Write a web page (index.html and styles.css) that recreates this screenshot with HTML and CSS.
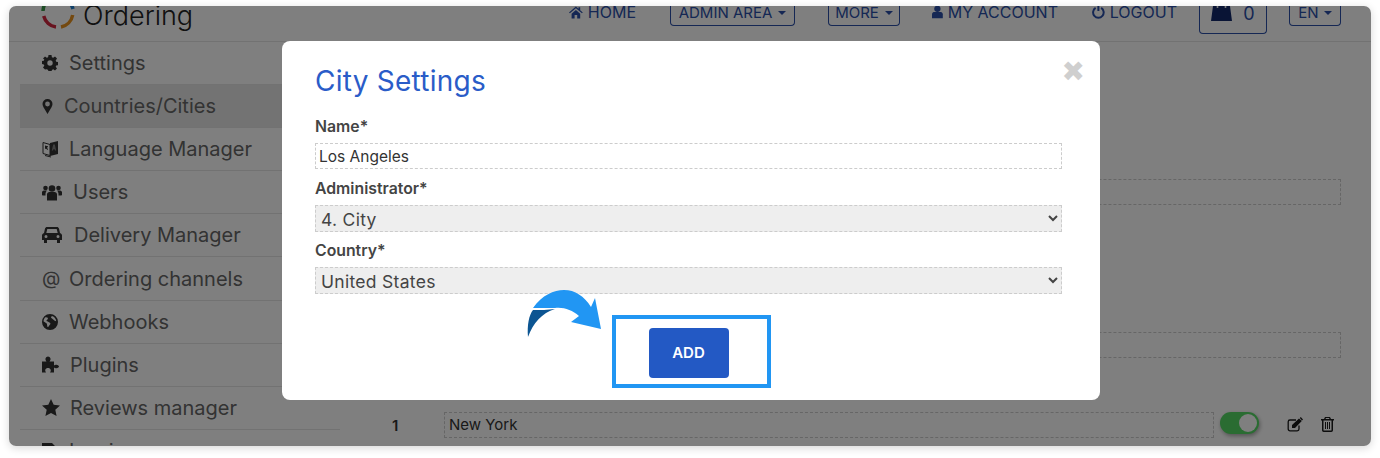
FILE: index.html
```html
<!DOCTYPE html>
<html lang="en">
<head>
<meta charset="utf-8">
<title>City Settings</title>
<link rel="stylesheet" href="styles.css">
</head>
<body>
<div class="card">
  <header class="topbar">
    <div class="logo">
      <svg class="logo-ring" viewBox="0 0 34 34" width="34" height="34"><g fill="none" stroke-width="3.5"><path d="M4.500 8A15 15 0 0 0 2 16" stroke="#3a9a4a"/><path d="M2.700 21A15 15 0 0 0 15 32" stroke="#d0263e"/><path d="M20 32A15 15 0 0 0 31.700 20" stroke="#e8921e"/><path d="M32 14A15 15 0 0 0 29 8" stroke="#1f7fd0"/></g></svg>
      <span class="logo-text">Ordering</span>
    </div>
    <nav class="nav">
      <a class="nav-link nav-home"><svg viewBox="0 0 16 14" width="15" height="13"><path fill="currentColor" d="M8 0l3 2.600V1h2v3.400L16 7l-1 1-7-6-7 6-1-1zM3 8.500L8 4l5 4.500V14H9.500v-4h-3v4H3z"/></svg>HOME</a>
      <a class="nav-btn nav-admin">ADMIN AREA<i class="caret"></i></a>
      <a class="nav-btn nav-more">MORE<i class="caret"></i></a>
      <a class="nav-link nav-account"><svg viewBox="0 0 12 14" width="12" height="14"><circle cx="6" cy="3.500" r="3.500" fill="currentColor"/><path fill="currentColor" d="M0 14V9.500C0 7.500 1.500 7 3 7h6c1.500 0 3 .5 3 2.500V14z"/></svg>MY ACCOUNT</a>
      <a class="nav-link nav-logout"><svg viewBox="0 0 14 14" width="14" height="14"><path fill="none" stroke="currentColor" stroke-width="2.200" d="M4 2.500A5.800 5.800 0 1 0 10 2.500M7 0v6"/></svg>LOGOUT</a>
      <a class="nav-btn nav-cart"><svg viewBox="0 0 21 15" width="21" height="15"><path fill="#12296b" fill-rule="evenodd" d="M2 0h17l2 15H0zM6.500 0a1 1 0 1 0 0 2 1 1 0 0 0 0-2zm8 0a1 1 0 1 0 0 2 1 1 0 0 0 0-2z"/></svg><span class="cart-count">0</span></a>
      <a class="nav-btn nav-lang">EN<i class="caret"></i></a>
    </nav>
  </header>
  <div class="body">
    <aside class="sidebar">
      <div class="item"><svg class="ico" viewBox="0 0 16 16" width="16" height="16"><path d="M6.500 0h3l.4 2.200 1.300.6L13 1.500 15 3.600l-1.300 1.800.5 1.300 2.300.4v3l-2.300.4-.5 1.200 1.300 1.900-2 2-1.800-1.300-1.300.6-.4 2.100h-3l-.4-2.100-1.300-.6L3 14.600l-2-2 1.300-1.900-.5-1.200L0 9.100v-3l1.800-.4.500-1.300L1 3.600l2-2.100 1.800 1.300 1.300-.6zM8 5.300a2.700 2.700 0 1 0 0 5.400 2.700 2.700 0 0 0 0-5.400z" fill-rule="evenodd"/></svg>Settings</div>
      <div class="item active"><svg class="ico ico-pin" viewBox="0 0 10 15" width="11" height="15"><path fill-rule="evenodd" d="M5 0a5 5 0 0 1 5 5c0 1.200-.4 2-1 3.200L5 15 1 8.200C.4 7 0 6.200 0 5a5 5 0 0 1 5-5zm0 2.600a2.400 2.400 0 1 0 0 4.800 2.400 2.400 0 0 0 0-4.800z"/></svg>Countries/Cities</div>
      <div class="item"><svg class="ico" viewBox="0 0 16 18" width="16" height="18"><path fill="none" stroke="#333" stroke-width="1" d="M1 2.500l7 2v11l-7-2zM3 15.500l6 1.500"/><path fill="#333" d="M3 5.500l3 .8v1L5 7l1 3-1-.3L4.700 9 3.800 8.800 3.500 9 3 8.500z"/><path d="M8 3l8-2v13l-8 2z"/><path fill="#808080" d="M11.200 4.500h1.600l1.400 6h-1.200l-.3-1.300h-1.400l-.3 1.300h-1.200z"/></svg>Language Manager</div>
      <div class="item"><svg class="ico" viewBox="0 0 20 16" width="20" height="19"><circle cx="10" cy="4" r="3.300"/><circle cx="3.500" cy="3.500" r="2.300"/><circle cx="16.500" cy="3.500" r="2.300"/><path d="M5 16V10c0-1.600 1-2.500 2.500-2.500h5C14 7.500 15 8.400 15 10v6z"/><path d="M0 10V8c0-1 .7-2 2-2h3.200c-1 .6-1.700 2-1.700 3.500V11H1c-.6 0-1-.4-1-1zM20 10V8c0-1-.7-2-2-2h-3.200c1 .6 1.700 2 1.700 3.500V11H19c.6 0 1-.4 1-1z"/></svg>Users</div>
      <div class="item"><svg class="ico ico-car" viewBox="0 0 20 16" width="20" height="16"><path fill-rule="evenodd" d="M5 0h10c1 0 1.600.6 2 1.600L18 6c1.200.4 2 1.300 2 2.600V13h-2v3h-3v-3H5v3H2v-3H0V8.600C0 7.300.8 6.400 2 6l1-4.400C3.400.6 4 0 5 0zm.3 2L4.300 6h11.400l-1-4zM4 8a1.500 1.500 0 1 0 0 3 1.500 1.500 0 0 0 0-3zm12 0a1.500 1.500 0 1 0 0 3 1.500 1.500 0 0 0 0-3z"/></svg>Delivery Manager</div>
      <div class="item"><span class="ico-at">@</span>Ordering channels</div>
      <div class="item"><svg class="ico" viewBox="0 0 16 16" width="16" height="16"><path fill-rule="evenodd" d="M8 0a8 8 0 1 1 0 16A8 8 0 0 1 8 0zM3 3.500C2 4.700 1.500 6 1.600 7.500c.8.200 1.300.8 2 1.300.6.400 1.200.5 1.300 1.200l.5 2.800c.5.500 1.200-.2 1.500-.8l1.500-2c.2-.6-.3-1.200-1-1.500l-1.600-1-1.300-.5c0-.7.500-1 1-1.400l.5-1.500C5.500 3.400 4 3.200 3 3.500zM10 2c-.6.500-1 1-1 1.800.6.700 1.400 1 2.200 1.600 1 .8 2 1.700 3 1.800C14 5 12.500 2.800 10 2z"/></svg>Webhooks</div>
      <div class="item"><svg class="ico ico-plug" viewBox="0 0 17 16" width="17" height="17"><path d="M0 5h4.500C4 4.200 3.200 3.500 3.500 2 3.800.7 5 0 6 0s2.200.7 2.500 2c.3 1.500-.5 2.200-1 3H12v4c.8-.5 1.400-1 2.500-.7 1.500.3 2.500 1 2.500 1.700s-1 1.400-2.500 1.700c-1.100.3-1.700-.2-2.500-.7v5H8c.5-.8 1-1.500.7-2.500C8.400 12 7.200 11.500 6 11.500s-2.400.5-2.700 1.800c-.3 1 .2 1.700.7 2.700H0z"/></svg>Plugins</div>
      <div class="item"><svg class="ico ico-star" viewBox="0 0 18 17" width="18" height="17"><path d="M9 0l2.700 5.800 6.300.7-4.700 4.300 1.300 6.200L9 13.900 3.400 17l1.300-6.200L0 6.500l6.300-.7z"/></svg>Reviews manager</div>
      <div class="item last"><svg class="ico" viewBox="0 0 16 16" width="16" height="16"><path d="M0 0h10l3 3v4H7v3h6v5H0zM9 8l4-3v2h3v3h-3v2z"/></svg>Invoices</div>
    </aside>
    <main class="main">
      <div class="field field-one"></div>
      <div class="field field-two"></div>
      <div class="row">
        <span class="row-num">1</span>
        <div class="row-input">New York</div>
        <span class="toggle"><span class="knob"></span></span>
        <svg class="row-edit" viewBox="0 0 16 15" width="16" height="15"><path fill="none" stroke="#1a1a1a" stroke-width="1.300" d="M12 8.500V12c0 1-.7 1.800-1.800 1.800H3C2 13.800 1.200 13 1.200 12V4.800C1.200 3.800 2 3 3 3h6"/><path fill="#1a1a1a" d="M5 8l7-6.500L14.800 4 8 11H5zM12.800 1l1-1L16 2.400l-1 1z"/></svg>
        <svg class="row-trash" viewBox="0 0 13 15" width="13" height="15"><path fill="#1a1a1a" fill-rule="evenodd" d="M4 0h5l1 2h3v1.500h-1V13c0 1.200-.7 2-1.700 2H2.700C1.700 15 1 14.200 1 13V3.500H0V2h3zm1 1l-.5 1h4L8 1zM2.500 3.500V13c0 .4.200.6.500.6h7c.3 0 .5-.2.500-.6V3.500zM4 5h1v7H4zm2 0h1v7H6zm2 0h1v7H8z"/></svg>
      </div>
    </main>
  </div>
  <div class="overlay">
    <section class="modal">
      <span class="close">✖</span>
      <h2 class="title">City Settings</h2>
      <label class="label">Name*</label>
      <input class="input" value="Los Angeles">
      <label class="label">Administrator*</label>
      <select class="select"><option>4. City</option></select>
      <label class="label">Country*</label>
      <select class="select"><option>United States</option></select>
      <div class="actions">
        <div class="highlight"><button class="add">ADD</button></div>
        <svg class="arrow" viewBox="0 0 74 48" width="74" height="48"><path fill="#0c5592" d="M0 47C-1 35 1 25 5 20C12 20 20 20 27 19C14 23 5 33 0 47z"/><path fill="#2196f3" d="M5 18C14 5 26 0 36 0C47 0 56 6 63 17L67 8L73 39L43 32L51 26C44 20 36 17 27 18C18 18 12 18 5 18z"/></svg>
      </div>
    </section>
  </div>
</div>
</body>
</html>
```
FILE: styles.css
```css
* { box-sizing: border-box; }
html, body { margin: 0; padding: 0; background: #fff; }
body { padding: 6px 9px 12px; font-family: Inter, "Open Sans", sans-serif; height: 458px; overflow: hidden; }
.card { position: relative; width: 1362px; height: 440px; background: #fff; border-radius: 7px; overflow: hidden; }
body::before { content: ""; position: absolute; left: 9px; top: 6px; width: 1362px; height: 440px; border-radius: 7px; box-shadow: 0 2px 8px rgba(0,0,0,.16); }
.topbar { display: flex; height: 36px; border-bottom: 1px solid #e4e4e4; overflow: hidden; }
.logo { display: flex; align-items: center; gap: 8px; margin: -15px 0 0 32px; height: 42px; flex: none; }
.logo-text { font-size: 27px; font-weight: 300; color: #222; padding-top: 6px; }
.nav { display: flex; align-items: flex-start; margin-left: auto; margin-right: 30px; font-size: 16px; }
.nav a { display: flex; align-items: center; color: #2a4fa8; white-space: nowrap; }
.nav-link { gap: 5px; height: 12px; }
.nav-btn { border: 1px solid #2a4fa8; border-top: 0; border-radius: 0 0 4px 4px; height: 20px; justify-content: center; padding-bottom: 6px; font-size: 15px; }
.caret { display: inline-block; margin-left: 6px; border: 4px solid transparent; border-top-color: currentColor; border-bottom: 0; }
.nav-home { width: 67px; margin-right: 34px; }
.nav-admin { width: 125px; margin-right: 33px; }
.nav-more { width: 72px; margin-right: 32px; }
.nav-account { width: 126px; margin-right: 34px; }
.nav-logout { width: 85px; margin-right: 22px; }
.nav-cart { width: 68px; height: 28px; padding: 0 0 13px; gap: 11px; margin-right: 22px; }
.cart-count { font-size: 18px; line-height: 15px; }
.nav-lang { width: 52px; }
.nav-lang .caret { margin-left: 5px; }
.body { display: flex; height: 404px; }
.sidebar { width: 320px; margin-left: 11px; flex: none; color: #666; font-size: 20px; }
.item { display: flex; align-items: center; height: 43.1px; padding-left: 22px; border-bottom: 1px solid #e4e4e4; white-space: nowrap; }
.item.active { background: #e6e6e6; }
.item.last { border-bottom: 0; }
.ico { fill: #333; margin-right: 11px; flex: none; }
.ico-pin { margin-right: 11px; }
.ico-car { margin-right: 12px; }
.ico-plug { margin-right: 11px; }
.ico-star { margin-right: 10px; }
.ico-at { width: 16px; margin-right: 11px; font-size: 19px; color: #666; text-align: center; }
.main { flex: 1; position: relative; display: flex; flex-direction: column; padding: 137px 30px 0 0; }
.field { height: 26px; border: 1px dashed #ccc; }
.field-one { margin-bottom: 127px; }
.field-two { margin-bottom: 54px; }
.row { display: flex; align-items: center; padding-left: 52px; height: 26px; color: #333; font-size: 15px; }
.row-num { width: 52px; font-weight: 600; }
.row-input { width: 770px; height: 26px; border: 1px dashed #ccc; padding-left: 4px; line-height: 24px; flex: none; }
.toggle { flex: none; position: relative; width: 39px; height: 22px; margin: -4px 0 0 6px; border-radius: 11px; background: #55d865; box-shadow: 1px 2px 4px rgba(0,0,0,.35); }
.knob { position: absolute; right: 2px; top: 2px; width: 18px; height: 18px; border-radius: 50%; background: #fff; }
.row-edit { margin: -2px 0 0 28px; flex: none; }
.row-trash { margin: -2px 0 0 18px; flex: none; }
.overlay { position: absolute; inset: 0; background: rgba(0,0,0,.5); }
.modal { position: absolute; left: 273px; top: 35px; width: 818px; height: 359px; background: #fff; border-radius: 8px; padding: 22px 38px 0 33px; display: flex; flex-direction: column; }
.close { position: absolute; right: 15px; top: 17px; font-size: 28px; line-height: 28px; color: #cfcfcf; font-weight: 700; font-family: "DejaVu Sans", sans-serif; }
.title { margin: 0 0 17px; font-size: 28px; line-height: 36px; font-weight: 400; letter-spacing: .25px; color: #2a5cc8; }
.label { display: block; font-size: 15.8px; font-weight: 600; line-height: 20px; color: #444; padding-top: 1px; margin-bottom: 6px; height: 21px; }
.input, .select { display: block; width: 100%; font-family: inherit; color: #333; border: 1px dashed #ccc; border-radius: 0; outline: 0; }
.input { height: 26px; padding: 0 3px; margin: 0 0 9px; font-size: 15.5px; background: #fff; }
.select { height: 27px; padding: 2px 1px 0; margin: 0 0 8px; font-size: 17.5px; letter-spacing: .3px; color: #444; background-color: #eee; }
.actions { position: relative; display: flex; justify-content: center; margin-top: 13px; }
.highlight { display: flex; align-items: center; justify-content: center; width: 159px; height: 73px; border: 4px solid #2196f3; margin-left: 6px; }
.add { width: 80px; height: 50px; margin: 2px 6px 0 0; border: 0; border-radius: 4px; background: #2359c4; color: #fff; font-family: inherit; font-size: 15px; font-weight: 600; }
.arrow { position: absolute; left: 213px; top: -25px; overflow: visible; }
```
